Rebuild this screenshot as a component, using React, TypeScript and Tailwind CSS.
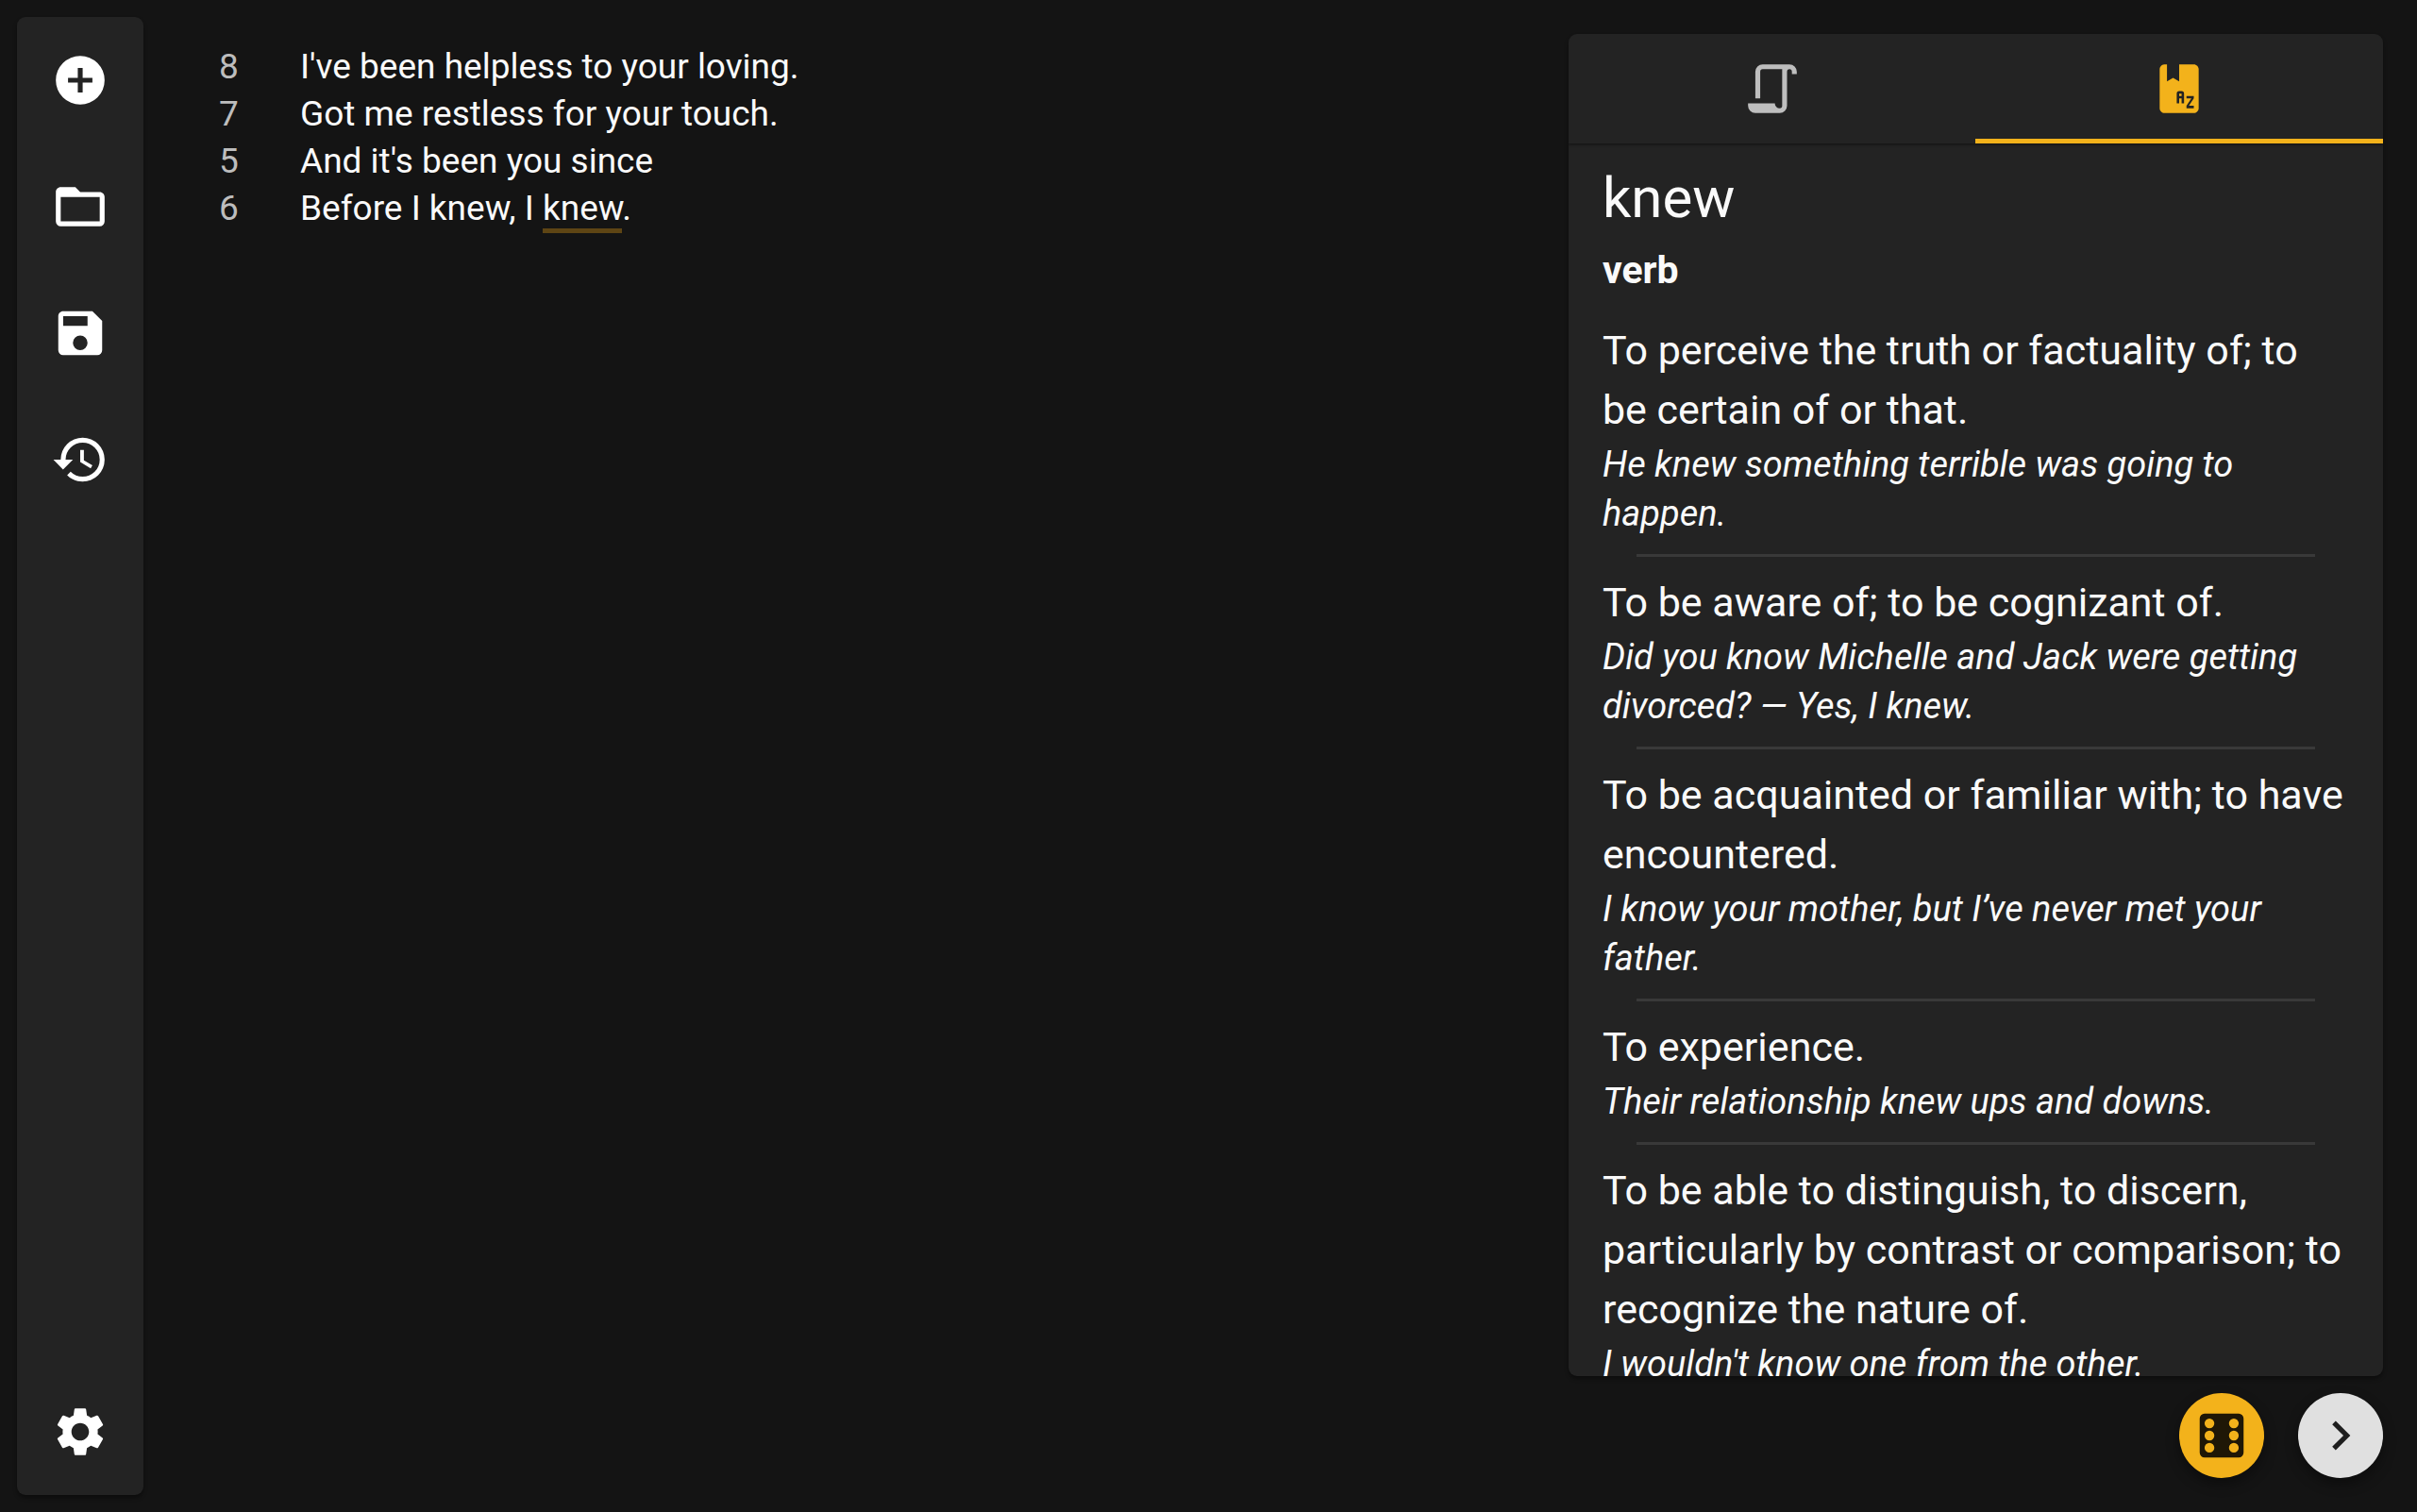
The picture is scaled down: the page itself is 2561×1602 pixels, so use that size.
import { Fragment } from "react";
import { MdSettings } from "react-icons/md";

const ICONS = {
  add: "M17,13H13V17H11V13H7V11H11V7H13V11H17M12,2A10,10 0 0,0 2,12A10,10 0 0,0 12,22A10,10 0 0,0 22,12A10,10 0 0,0 12,2Z",
  folder:
    "M20,18H4V8H20M20,6H12L10,4H4C2.89,4 2,4.89 2,6V18A2,2 0 0,0 4,20H20A2,2 0 0,0 22,18V8C22,6.89 21.1,6 20,6Z",
  save: "M15,9H5V5H15M12,19A3,3 0 0,1 9,16A3,3 0 0,1 12,13A3,3 0 0,1 15,16A3,3 0 0,1 12,19M17,3H5C3.89,3 3,3.9 3,5V19A2,2 0 0,0 5,21H19A2,2 0 0,0 21,19V7L17,3Z",
  history:
    "M13.5,8H12V13L16.28,15.54L17,14.33L13.5,12.25V8M13,3A9,9 0 0,0 4,12H1L4.96,16.03L9,12H6A7,7 0 0,1 13,5A7,7 0 0,1 20,12A7,7 0 0,1 13,19C11.07,19 9.32,18.21 8.06,16.94L6.64,18.36C8.27,20 10.5,21 13,21A9,9 0 0,0 22,12A9,9 0 0,0 13,3",
  script:
    "M15,20A1,1 0 0,0 16,19V4H8A1,1 0 0,0 7,5V16H5V5A3,3 0 0,1 8,2H19A3,3 0 0,1 22,5V6H20V5A1,1 0 0,0 19,4A1,1 0 0,0 18,5V9L18,19A3,3 0 0,1 15,22H5A3,3 0 0,1 2,19V18H13A2,2 0 0,0 15,20Z",
  dictionary:
    "M5.81,2C4.83,2.09 4,3 4,4V20C4,21.05 4.95,22 6,22H18C19.05,22 20,21.05 20,20V4C20,2.89 19.1,2 18,2H12V9L9.5,7.5L7,9V2H6C5.94,2 5.87,2 5.81,2M12,13H13A1,1 0 0,1 14,14V18H13V16H12V18H11V14A1,1 0 0,1 12,13M12,14V15H13V14H12M15,15H18V16L16,19H18V20H15V19L17,16H15V15Z",
  dice: "M5,3H19A2,2 0 0,1 21,5V19A2,2 0 0,1 19,21H5A2,2 0 0,1 3,19V5A2,2 0 0,1 5,3M7,5A2,2 0 0,0 5,7A2,2 0 0,0 7,9A2,2 0 0,0 9,7A2,2 0 0,0 7,5M17,15A2,2 0 0,0 15,17A2,2 0 0,0 17,19A2,2 0 0,0 19,17A2,2 0 0,0 17,15M17,10A2,2 0 0,0 15,12A2,2 0 0,0 17,14A2,2 0 0,0 19,12A2,2 0 0,0 17,10M17,5A2,2 0 0,0 15,7A2,2 0 0,0 17,9A2,2 0 0,0 19,7A2,2 0 0,0 17,5M7,10A2,2 0 0,0 5,12A2,2 0 0,0 7,14A2,2 0 0,0 9,12A2,2 0 0,0 7,10M7,15A2,2 0 0,0 5,17A2,2 0 0,0 7,19A2,2 0 0,0 9,17A2,2 0 0,0 7,15Z",
  next: "M8.59,16.58L13.17,12L8.59,7.41L10,6L16,12L10,18L8.59,16.58Z",
};

function Icon({ name }: { name: keyof typeof ICONS }) {
  return (
    <svg viewBox="0 0 24 24" className="size-[62px]" fill="currentColor" fillRule="evenodd" aria-hidden="true">
      <path d={ICONS[name]} />
    </svg>
  );
}

const ACTIONS: { name: keyof typeof ICONS; label: string }[] = [
  { name: "add", label: "New" },
  { name: "folder", label: "Open" },
  { name: "save", label: "Save" },
  { name: "history", label: "History" },
];

const LINES = [
  { count: 8, text: "I've been helpless to your loving." },
  { count: 7, text: "Got me restless for your touch." },
  { count: 5, text: "And it's been you since" },
];

const DEFINITIONS = [
  {
    meaning: "To perceive the truth or factuality of; to be certain of or that.",
    example: "He knew something terrible was going to happen.",
  },
  {
    meaning: "To be aware of; to be cognizant of.",
    example: "Did you know Michelle and Jack were getting divorced? — Yes, I knew.",
  },
  {
    meaning: "To be acquainted or familiar with; to have encountered.",
    example: "I know your mother, but I’ve never met your father.",
  },
  { meaning: "To experience.", example: "Their relationship knew ups and downs." },
  {
    meaning:
      "To be able to distinguish, to discern, particularly by contrast or comparison; to recognize the nature of.",
    example: "I wouldn't know one from the other.",
  },
];

function Sidebar() {
  return (
    <nav
      aria-label="Tools"
      className="my-[18px] ml-[18px] flex w-[134px] shrink-0 flex-col justify-between rounded-[9px] bg-[#232323] text-white shadow-[0_3px_4px_rgba(0,0,0,0.4)]"
    >
      <div className="flex flex-col">
        {ACTIONS.map((a) => (
          <button key={a.name} aria-label={a.label} className="flex h-[134px] items-center justify-center">
            <Icon name={a.name} />
          </button>
        ))}
      </div>
      <button aria-label="Settings" className="flex h-[134px] items-center justify-center">
        <MdSettings className="size-[62px]" />
      </button>
    </nav>
  );
}

function Editor() {
  return (
    <main className="min-w-0 flex-1 px-20 pt-[46px]">
      <div className="grid grid-cols-[86px_1fr] text-[37px] leading-[50px]">
        {LINES.map((l) => (
          <Fragment key={l.count}>
            <span className="text-[#bdbdbd]">{l.count}</span>
            <p>{l.text}</p>
          </Fragment>
        ))}
        <span className="text-[#bdbdbd]">6</span>
        <p>
          Before I knew, I <span className="border-b-[5px] border-[#5e4514]">knew</span>.
        </p>
      </div>
    </main>
  );
}

function DictionaryPanel() {
  return (
    <section className="flex min-h-0 flex-1 flex-col overflow-hidden rounded-[9px] bg-[#232323] shadow-[0_3px_4px_rgba(0,0,0,0.4)]">
      <div role="tablist" className="z-10 grid h-[116px] shrink-0 grid-cols-2 shadow-[0_1px_3px_rgba(0,0,0,0.6)]">
        <button role="tab" aria-selected="false" aria-label="Script" className="flex items-center justify-center text-[#bebebe]">
          <Icon name="script" />
        </button>
        <button
          role="tab"
          aria-selected="true"
          aria-label="Dictionary"
          className="flex items-center justify-center text-[#f3b21b] shadow-[inset_0_-5px_0_#f3b21b]"
        >
          <Icon name="dictionary" />
        </button>
      </div>
      <div role="tabpanel" className="min-h-0 flex-1 overflow-x-hidden overflow-y-auto px-9 pt-[18px] [scrollbar-width:none]">
        <h1 className="text-[60px] leading-[80px]">knew</h1>
        <h2 className="mb-[17px] text-[41px] leading-[73px] font-bold">verb</h2>
        {DEFINITIONS.map((d, i) => (
          <Fragment key={d.meaning}>
            {i > 0 && <hr className="mx-9 my-[17px] border-t-[3px] border-[#393939]" />}
            <p className="text-[43px] leading-[63px]">{d.meaning}</p>
            <p className="text-[38px] leading-[52px] italic">{d.example}</p>
          </Fragment>
        ))}
      </div>
    </section>
  );
}

export default function App() {
  return (
    <div className="flex h-screen overflow-hidden bg-[#141414] font-[Roboto,sans-serif] text-[#fafafa]">
      <Sidebar />
      <Editor />
      <aside className="my-9 mr-9 flex w-[33.7vw] shrink-0 flex-col gap-[18px]">
        <DictionaryPanel />
        <div className="flex justify-end gap-9">
          <button
            aria-label="Random word"
            className="flex size-[90px] items-center justify-center rounded-full bg-[#f3b21b] text-[#1f1706] shadow-[0_6px_14px_rgba(0,0,0,0.4)]"
          >
            <Icon name="dice" />
          </button>
          <button
            aria-label="Next"
            className="flex size-[90px] items-center justify-center rounded-full bg-[#e0e0e0] text-[#1e1e1e] shadow-[0_6px_14px_rgba(0,0,0,0.4)]"
          >
            <Icon name="next" />
          </button>
        </div>
      </aside>
    </div>
  );
}
